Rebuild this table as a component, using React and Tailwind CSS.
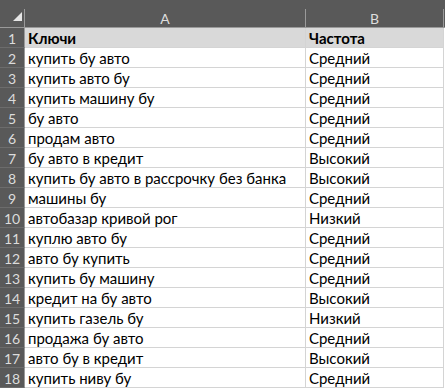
const rows = [
  ['Ключи', 'Частота'],
  ['купить бу авто', 'Средний'],
  ['купить авто бу', 'Средний'],
  ['купить машину бу', 'Средний'],
  ['бу авто', 'Средний'],
  ['продам авто', 'Средний'],
  ['бу авто в кредит', 'Высокий'],
  ['купить бу авто в рассрочку без банка', 'Высокий'],
  ['машины бу', 'Средний'],
  ['автобазар кривой рог', 'Низкий'],
  ['куплю авто бу', 'Средний'],
  ['авто бу купить', 'Средний'],
  ['купить бу машину', 'Средний'],
  ['кредит на бу авто', 'Высокий'],
  ['купить газель бу', 'Низкий'],
  ['продажа бу авто', 'Средний'],
  ['авто бу в кредит', 'Высокий'],
  ['купить ниву бу', 'Средний'],
];

export default function App() {
  return (
    <div className="w-[445px] h-[389px] overflow-hidden bg-white font-['Lato','Noto_Sans',sans-serif] text-[15px] text-black">
      {/* column header strip */}
      <div className="flex h-[28px] bg-[#595959] border-b border-[#9a9a9a]">
        <div className="relative w-[25px] shrink-0 border-r border-[#9a9a9a] mt-[9px]">
          <div className="absolute right-[2px] bottom-[6px] w-0 h-0 border-l-[9px] border-l-transparent border-b-[9px] border-b-[#e6e6e6]" />
        </div>
        <div className="w-[281px] shrink-0 mt-[9px] border-r border-[#9a9a9a] flex items-center justify-center text-[14px] text-[#dedede]">
          A
        </div>
        <div className="w-[138px] shrink-0 mt-[9px] border-r border-[#9a9a9a] flex items-center justify-center text-[14px] text-[#dedede]">
          B
        </div>
      </div>

      {rows.map(([key, freq], i) => {
        const head = i === 0;
        return (
          <div key={i} className="flex h-[20px]">
            <div className="w-[25px] shrink-0 bg-[#595959] border-r border-b border-r-[#9a9a9a] border-b-[#6c6c6c] flex items-center justify-center pt-px text-[14px] text-[#dcdcdc]">
              {i + 1}
            </div>
            <div
              className={`w-[281px] shrink-0 border-r border-b border-[#d4d4d4] pl-[3px] pt-px flex items-center whitespace-nowrap ${
                head ? 'bg-[#d9d9d9] font-bold' : ''
              }`}
            >
              {key}
            </div>
            <div
              className={`w-[138px] shrink-0 border-r border-b border-[#d4d4d4] pl-[3px] pt-px flex items-center whitespace-nowrap ${
                head ? 'bg-[#d9d9d9] font-bold' : ''
              }`}
            >
              {freq}
            </div>
          </div>
        );
      })}
    </div>
  );
}
